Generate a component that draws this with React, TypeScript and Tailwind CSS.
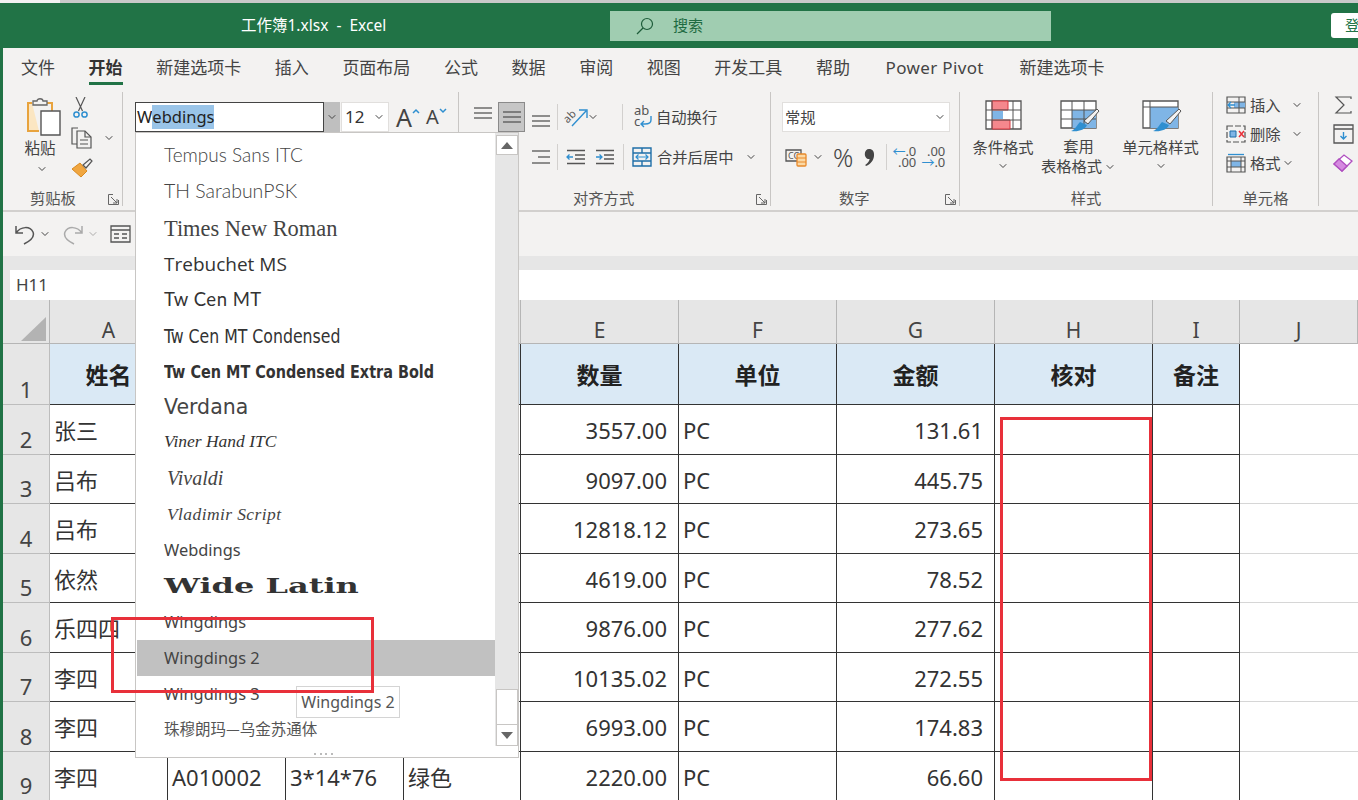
import { ChevronDown } from "lucide-react";

const TABS = ["文件", "开始", "新建选项卡", "插入", "页面布局", "公式", "数据", "审阅", "视图", "开发工具", "帮助", "Power Pivot", "新建选项卡"];

const ROWS = [
  { n: 2, name: "张三", qty: "3557.00", amt: "131.61" },
  { n: 3, name: "吕布", qty: "9097.00", amt: "445.75" },
  { n: 4, name: "吕布", qty: "12818.12", amt: "273.65" },
  { n: 5, name: "依然", qty: "4619.00", amt: "78.52" },
  { n: 6, name: "乐四四", qty: "9876.00", amt: "277.62" },
  { n: 7, name: "李四", qty: "10135.02", amt: "272.55" },
  { n: 8, name: "李四", qty: "6993.00", amt: "174.83" },
  { n: 9, name: "李四", qty: "2220.00", amt: "66.60", b: "A010002", c: "3*14*76", d: "绿色" },
];

const FONTS = [
  { label: "Tempus Sans ITC", cls: "-mt-[4px] font-['Lato',sans-serif] font-light text-[19px] text-[#444]" },
  { label: "TH SarabunPSK", cls: "-mt-[4px] font-['Lato',sans-serif] font-light text-[19.5px] text-[#444]" },
  { label: "Times New Roman", cls: "font-['Liberation_Serif',serif] text-[22.4px] text-[#444]" },
  { label: "Trebuchet MS", cls: "font-['Open_Sans',sans-serif] text-[19px] text-[#333]" },
  { label: "Tw Cen MT", cls: "font-['Lato',sans-serif] text-[18.5px] tracking-[0.5px] text-[#333]" },
  { label: "Tw Cen MT Condensed", cls: "origin-left scale-x-[0.92] font-['DejaVu_Sans_Condensed',sans-serif] text-[19px] text-[#333]" },
  { label: "Tw Cen MT Condensed Extra Bold", cls: "origin-left scale-x-[0.89] font-['DejaVu_Sans_Condensed',sans-serif] font-bold text-[18px] text-[#333]" },
  { label: "Verdana", cls: "font-['DejaVu_Sans',sans-serif] text-[20.5px] text-[#444]" },
  { label: "Viner Hand ITC", cls: "-mt-[4px] font-['Liberation_Serif',serif] italic text-[17.5px] text-[#333]" },
  { label: "Vivaldi", cls: "-mt-[2px] ml-[3px] font-['Liberation_Serif',serif] italic text-[20px] text-[#444]" },
  { label: "Vladimir Script", cls: "-mt-[2px] ml-[3px] font-['Liberation_Serif',serif] italic text-[17.5px] tracking-[0.4px] text-[#444]" },
  { label: "Webdings", cls: "font-['Noto_Sans',sans-serif] text-[16.4px] text-[#444]" },
  { label: "Wide Latin", cls: "origin-left scale-x-[1.6] font-['DejaVu_Serif',serif] font-bold text-[20px] text-[#333]" },
  { label: "Wingdings", cls: "font-['Noto_Sans',sans-serif] text-[16.4px] text-[#444]" },
  { label: "Wingdings 2", cls: "font-['Noto_Sans',sans-serif] text-[16.4px] text-[#444]", active: true },
  { label: "Wingdings 3", cls: "font-['Noto_Sans',sans-serif] text-[16.4px] text-[#444]" },
  { label: "珠穆朗玛—乌金苏通体", cls: "-mt-[3px] font-['Noto_Sans_CJK_SC',sans-serif] text-[15.5px] text-[#555]" },
];

function Chev({ className = "" }: { className?: string }) {
  return <ChevronDown size={12} strokeWidth={2} className={`shrink-0 text-[#444] ${className}`} />;
}

function Launcher() {
  return (
    <svg width="11" height="11" viewBox="0 0 11 11" fill="none" stroke="#666" strokeWidth="1">
      <path d="M5 .5H.5V10.5H10.5V6" />
      <path d="M3 3L9 9M9 5V9H5" />
    </svg>
  );
}

function Lines({ ys, xs }: { ys: number[]; xs: [number, number][] }) {
  return (
    <svg width="20" height="24" viewBox="0 0 20 24" stroke="#555" strokeWidth="1.3">
      {ys.map((y, i) => (
        <line key={y} x1={xs[i][0]} x2={xs[i][1]} y1={y} y2={y} />
      ))}
    </svg>
  );
}

function Indent({ flip }: { flip?: boolean }) {
  return (
    <svg width="20" height="20" viewBox="0 0 20 20" fill="none">
      <path d="M1 3.5H19M9 8H19M9 12H19M1 16.5H19" stroke="#555" strokeWidth="1.3" />
      <path d={flip ? "M1 10H7M4.5 7.5L7 10L4.5 12.5" : "M1 10H7M3.5 7.5L1 10L3.5 12.5"} stroke="#2f8fd0" strokeWidth="1.3" />
    </svg>
  );
}

function Group({ w, label, launcher, labelClass = "justify-center", children }: { w: string; label?: string; launcher?: boolean; labelClass?: string; children: React.ReactNode }) {
  return (
    <div className={`relative mt-[7px] mb-[4px] flex shrink-0 flex-col border-r border-[#c8c6c4] ${w}`}>
      <div className="h-[98px]">{children}</div>
      <div className={`flex h-[16px] items-center ${labelClass}`}>
        {label && <span className="text-[15.3px] text-[#555]">{label}</span>}
      </div>
      {launcher && (
        <span className="absolute right-[3px] bottom-[1px]">
          <Launcher />
        </span>
      )}
    </div>
  );
}

function Ribbon() {
  return (
    <div className="flex h-[127px] border-b-2 border-[#d2d0ce] bg-[#f3f2f1]">
      <Group w="w-[120px]" label="剪贴板" launcher labelClass="justify-start pl-[27px]">
        <div className="flex">
          <div className="ml-[20px] flex w-[40px] flex-col items-center">
            <svg className="mt-[5px]" width="40" height="40" viewBox="0 0 40 40" fill="none">
              <path d="M9 6H5V34H16" stroke="#e8a33d" strokeWidth="2" fill="#fbe6c2" />
              <path d="M24 6H29V14" stroke="#e8a33d" strokeWidth="2" />
              <path d="M10 8V4H14C14 1 20 1 20 4H24V8Z" fill="#f3f2f1" stroke="#666" strokeWidth="1.3" />
              <path d="M18 14H37V38H18Z" fill="#fff" stroke="#555" strokeWidth="1.4" />
            </svg>
            <span className="mt-[1px] -ml-[6px] text-[15.5px] leading-[20px] text-[#444]">粘贴</span>
            <Chev className="mt-[5px] -ml-[2px]" />
          </div>
          <div className="ml-[8px] flex flex-col items-start pt-[5px]">
            <svg className="ml-[1px]" width="17" height="22" viewBox="0 0 17 22" fill="none">
              <path d="M4 0L10.5 14M13 0L6.5 14" stroke="#555" strokeWidth="1.2" />
              <circle cx="4.5" cy="17.5" r="2.6" stroke="#2f8fd0" strokeWidth="1.5" />
              <circle cx="12.5" cy="17.5" r="2.6" stroke="#2f8fd0" strokeWidth="1.5" />
            </svg>
            <div className="mt-[8px] flex items-center gap-[11px]">
              <svg width="21" height="22" viewBox="0 0 21 22" fill="none" stroke="#555" strokeWidth="1.2">
                <path d="M7 1H1V17H6" />
                <path d="M6 4H14L20 10V21H6Z" fill="#f3f2f1" />
                <path d="M14 4V10H20M9 13H17M9 17H17" />
              </svg>
              <Chev />
            </div>
            <svg className="mt-[9px]" width="22" height="20" viewBox="0 0 22 20" fill="none">
              <path d="M1 11L9 5L16 13L10 19Z" fill="#f0a640" stroke="#d98a20" strokeWidth="1" />
              <path d="M12 7L19 1L21 3L15 10Z" fill="#f3f2f1" stroke="#555" strokeWidth="1.2" />
            </svg>
          </div>
        </div>
      </Group>

      <Group w="w-[336px]">
        <div className="mt-[10px] ml-[12px] flex h-[30px] items-center">
          <div className="flex h-[30px] w-[189px] items-center border-[1.5px] border-[#444] bg-white pl-[1px] text-[16.5px] text-[#222]">
            W<span className="bg-[#99c4e8]">ebdings</span>
          </div>
          <div className="flex h-[30px] w-[16px] items-center justify-center bg-[#bfbfbf]">
            <Chev />
          </div>
          <div className="ml-[1px] flex h-[30px] w-[48px] items-center justify-between border border-[#e1dfdd] bg-white pr-[3px] pl-[3px] text-[17px] text-[#333]">
            12
            <Chev />
          </div>
          <span className="ml-[7px] text-[25px] leading-none text-[#444]">A</span>
          <svg className="mb-[12px]" width="8" height="6" viewBox="0 0 8 6" fill="none" stroke="#2f8fd0" strokeWidth="1.5"><path d="M1 5L4 2L7 5" /></svg>
          <span className="ml-[6px] text-[20px] leading-none text-[#444]">A</span>
          <svg className="mb-[12px]" width="8" height="6" viewBox="0 0 8 6" fill="none" stroke="#2f8fd0" strokeWidth="1.5"><path d="M1 1L4 4L7 1" /></svg>
        </div>
      </Group>

      <Group w="w-[312px]" label="对齐方式" launcher labelClass="justify-start pl-[114px]">
        <div className="ml-[14px] mt-[10px] flex h-[30px] items-center">
          <Lines ys={[3, 8, 13]} xs={[[1, 19], [1, 19], [1, 19]]} />
          <div className="ml-[5px] flex h-[30px] w-[27px] items-center justify-center border border-[#8a8a8a] bg-[#c6c6c6]">
            <Lines ys={[7, 12, 17]} xs={[[1, 19], [1, 19], [1, 19]]} />
          </div>
          <div className="ml-[6px]">
            <Lines ys={[11, 16, 21]} xs={[[1, 19], [1, 19], [1, 19]]} />
          </div>
          <div className="ml-[6px] h-[26px] w-px bg-[#d2d0ce]" />
          <svg className="ml-[5px]" width="26" height="22" viewBox="0 0 26 22" fill="none">
            <text x="1" y="15" fontSize="11" fill="#555" transform="rotate(-45 6 12)">ab</text>
            <path d="M9 20L23 5M16 4H24V12" stroke="#2f8fd0" strokeWidth="1.4" />
          </svg>
          <Chev className="-ml-[2px]" />
          <div className="ml-[23px] h-[26px] w-px bg-[#d2d0ce]" />
          <svg className="ml-[11px]" width="18" height="24" viewBox="0 0 18 24" fill="none">
            <text x="0" y="10" fontSize="13" fill="#555">ab</text>
            <text x="0" y="21" fontSize="13" fill="#555">c</text>
            <path d="M17 11V15C17 18 14 19 11 19H7M10 16L7 19L10 22" stroke="#2f8fd0" strokeWidth="1.4" />
          </svg>
          <span className="ml-[4px] text-[15.3px] text-[#444]">自动换行</span>
        </div>
        <div className="ml-[14px] mt-[10px] flex h-[30px] items-center">
          <div className="ml-[58px]">
            <Lines ys={[6, 12, 18]} xs={[[1, 19], [7, 19], [1, 19]]} />
          </div>
          <div className="ml-[6px] h-[26px] w-px bg-[#d2d0ce]" />
          <div className="ml-[8px]"><Indent /></div>
          <div className="ml-[9px]"><Indent flip /></div>
          <div className="ml-[8px] h-[26px] w-px bg-[#d2d0ce]" />
          <svg className="ml-[8px]" width="20" height="20" viewBox="0 0 20 20" fill="none">
            <path d="M1 1H19V19H1ZM1 6H19M1 14H19M10 1V6M10 14V19" stroke="#1f6fa8" strokeWidth="1.4" />
            <path d="M4 10H16M6.5 7.5L4 10L6.5 12.5M13.5 7.5L16 10L13.5 12.5" stroke="#2f8fd0" strokeWidth="1.2" />
          </svg>
          <span className="ml-[5px] text-[15.3px] text-[#444]">合并后居中</span>
          <Chev className="ml-[11px]" />
        </div>
      </Group>

      <Group w="w-[189px]" label="数字" launcher labelClass="justify-start pl-[68px]">
        <div className="mt-[10px] ml-[11px] flex h-[30px] w-[168px] items-center justify-between border border-[#e1dfdd] bg-white pr-[3px] pl-[2px] text-[15.3px] text-[#444]">
          常规
          <Chev />
        </div>
        <div className="mt-[10px] ml-[14px] flex h-[30px] items-center">
          <svg width="22" height="20" viewBox="0 0 22 20" fill="none">
            <path d="M1 3H16V14H1Z" stroke="#555" strokeWidth="1.3" />
            <text x="3" y="12" fontSize="9" fill="#555">CC</text>
            <rect x="12" y="7" width="9" height="12" rx="1" fill="#fbd9a5" stroke="#e8892a" strokeWidth="1.3" />
            <path d="M12 11H21M12 15H21" stroke="#e8892a" />
          </svg>
          <Chev className="ml-[5px]" />
          <span className="ml-[9px] text-[25px] leading-none font-light text-[#444]">%</span>
          <svg className="ml-[11px]" width="11" height="19" viewBox="0 0 11 19"><path d="M5 1C8.5 1 10.5 3.5 10 8C9.6 12 7 16 2 18L1.2 17C4 15 5.4 13 5.6 11C2.8 11.4 .8 9 .8 6C.8 3 2.6 1 5 1Z" fill="#444" /></svg>
          <div className="ml-[11px] h-[26px] w-px bg-[#d2d0ce]" />
          <div className="ml-[7px] flex w-[22px] flex-col items-end text-[13px] leading-[11px] text-[#555]">
            <span><span className="text-[#2f8fd0]">←</span>.0</span>
            <span>.00</span>
          </div>
          <div className="ml-[7px] flex w-[22px] flex-col items-end text-[13px] leading-[11px] text-[#555]">
            <span>.00</span>
            <span><span className="text-[#2f8fd0]">→</span>.0</span>
          </div>
        </div>
      </Group>

      <Group w="w-[253px]" label="样式">
        <div className="flex pt-[8px]">
          <div className="ml-[12px] flex w-[62px] flex-col items-center">
            <svg width="37" height="30" viewBox="0 0 37 30" fill="none">
              <path d="M1 1H36V29H1Z" fill="#fff" stroke="#555" strokeWidth="1.3" />
              <path d="M7 1H23V10H7ZM7 20H25V29H7Z" fill="#f5888d" stroke="#d9363e" />
              <path d="M7 11H18V19H7Z" fill="#7fb5e6" />
              <path d="M1 10H36M1 20H36M7 1V29M28 1V29" stroke="#555" strokeWidth="1" />
            </svg>
            <span className="mt-[6px] text-[15.3px] leading-[22px] whitespace-nowrap text-[#444]">条件格式</span>
            <Chev className="mt-[2px]" />
          </div>
          <div className="ml-[10px] flex w-[69px] flex-col items-center">
            <svg className="ml-[3px]" width="40" height="32" viewBox="0 0 40 32" fill="none">
              <path d="M1 1H36V28H1Z" fill="#fff" stroke="#555" strokeWidth="1.3" />
              <path d="M12 10H36V28H12Z" fill="#7fb5e6" />
              <path d="M1 10H36M1 19H36M12 1V28M24 1V28" stroke="#555" strokeWidth="1" />
              <path d="M24 21L37 9L39 11L28 24Z" fill="#f3f2f1" stroke="#555" />
              <path d="M11 31C15 30 17 25 20 22L27 25C25 30 18 32 11 31Z" fill="#2f8fd0" />
            </svg>
            <span className="mt-[4px] text-[15.3px] leading-[20px] text-[#444]">套用</span>
            <span className="flex text-[15.3px] leading-[20px] whitespace-nowrap text-[#444]">表格格式<Chev className="mt-[5px] ml-[2px]" /></span>
          </div>
          <div className="ml-[9px] flex w-[77px] flex-col items-center">
            <svg className="ml-[3px]" width="40" height="32" viewBox="0 0 40 32" fill="none">
              <path d="M1 1H36V28H1Z" fill="#fff" stroke="#555" strokeWidth="1.3" />
              <path d="M8 7H36V28H8Z" fill="#7fb5e6" />
              <path d="M1 7H36M8 1V28" stroke="#555" strokeWidth="1" />
              <path d="M24 21L37 9L39 11L28 24Z" fill="#f3f2f1" stroke="#555" />
              <path d="M11 31C15 30 17 25 20 22L27 25C25 30 18 32 11 31Z" fill="#2f8fd0" />
            </svg>
            <span className="mt-[4px] text-[15.3px] leading-[22px] whitespace-nowrap text-[#444]">单元格样式</span>
            <Chev className="mt-[2px]" />
          </div>
        </div>
      </Group>

      <Group w="w-[106px]" label="单元格">
        <div className="flex flex-col gap-[7px] pt-[2px] pl-[13px] text-[15.3px] text-[#444]">
          <div className="flex h-[22px] items-center">
            <svg width="20" height="18" viewBox="0 0 20 18" fill="none">
              <path d="M1 1H19V17H1Z" stroke="#555" strokeWidth="1.2" />
              <path d="M8 6H19V12H8Z" fill="#7fb5e6" />
              <path d="M1 6H19M1 12H19M13 1V17" stroke="#555" />
              <path d="M2 9H9M5 6L2 9L5 12" stroke="#2f8fd0" strokeWidth="1.3" />
            </svg>
            <span className="ml-[4px]">插入</span>
            <Chev className="ml-[10px]" />
          </div>
          <div className="flex h-[22px] items-center">
            <svg width="20" height="18" viewBox="0 0 20 18" fill="none">
              <path d="M1 1H19V17H1Z" stroke="#555" strokeWidth="1.2" strokeDasharray="6 2" />
              <path d="M4 6H10V12H4Z" fill="#7fb5e6" stroke="#1f6fa8" />
              <path d="M13 6L18 12M18 6L13 12" stroke="#e8303a" strokeWidth="1.5" />
            </svg>
            <span className="ml-[4px]">删除</span>
            <Chev className="ml-[10px]" />
          </div>
          <div className="flex h-[22px] items-center">
            <svg width="20" height="20" viewBox="0 0 20 20" fill="none">
              <path d="M1 4H19V19H1Z" stroke="#555" strokeWidth="1.2" />
              <path d="M5 8H15V14H5Z" fill="#7fb5e6" />
              <path d="M1 8H19M1 14H19M5 4V19M15 4V19" stroke="#555" />
              <path d="M2 1.5H18" stroke="#2f8fd0" strokeWidth="1.3" />
            </svg>
            <span className="ml-[4px]">格式</span>
            <Chev className="ml-[1px]" />
          </div>
        </div>
      </Group>

      <div className="my-[7px] flex shrink-0 flex-col gap-[9px] pt-[3px] pl-[14px]">
        <svg width="20" height="20" viewBox="0 0 20 20" fill="none"><path d="M18 4V2H3L11 10L3 18H18V16" stroke="#555" strokeWidth="1.2" /></svg>
        <svg width="21" height="20" viewBox="0 0 21 20" fill="none">
          <path d="M1 1H20V19H1ZM1 5H20" stroke="#555" strokeWidth="1.3" />
          <path d="M10.5 8V15M7.5 12L10.5 15L13.5 12" stroke="#2f8fd0" strokeWidth="1.4" />
        </svg>
        <svg width="20" height="20" viewBox="0 0 20 20" fill="none">
          <path d="M1 11L11 2L19 8L9 18Z" fill="#fff" stroke="#b04fc0" strokeWidth="1.3" />
          <path d="M1 11L6 6L14 13L9 18Z" fill="#d58ae0" stroke="#b04fc0" strokeWidth="1.3" />
        </svg>
      </div>
    </div>
  );
}

function Sheet() {
  const colHead = "flex items-end justify-center border-r border-b border-[#b5b5b5] bg-[#e6e6e6] text-[21px] leading-[26px] text-[#444]";
  const rowHead = "flex items-end justify-center border-r border-b border-[#bdbdbd] bg-[#e6e6e6] pb-[1px] text-[22px] leading-[28px] text-[#444]";
  const head = "flex items-center justify-center border-r border-b border-[#333] bg-[#dae9f5] pt-[2px] text-[23px] font-bold text-[#222]";
  const cell = "flex items-center overflow-hidden border-r border-b border-[#333] pt-[2px] text-[22px] whitespace-nowrap text-[#333]";
  const left = `${cell} pl-[4px]`;
  const right = `${cell} justify-end pr-[11px]`;
  const blank = "border-r border-b border-[#333]";
  const empty = "border-b border-[#d6d6d6]";

  return (
    <div className="grid grid-cols-[47px_118px_118px_118px_117px_158px_158px_158px_158px_87px_118px] grid-rows-[44px_61px_50px_49px_50px_49px_50px_49px_50px_49px]">
      <div className="flex items-end justify-end border-r border-b border-[#b5b5b5] bg-[#e6e6e6] pr-[2px] pb-[2px]">
        <svg width="26" height="24" viewBox="0 0 26 24"><path d="M25 0V24H0Z" fill="#b3b3b3" /></svg>
      </div>
      {["A", "", "", "", "E", "F", "G", "H", "I", "J"].map((c, i) => (
        <div key={i} className={colHead}>{c}</div>
      ))}

      <div className={rowHead}>1</div>
      <div className={head}>姓名</div>
      <div className={head} />
      <div className={head} />
      <div className={head} />
      <div className={head}>数量</div>
      <div className={head}>单位</div>
      <div className={head}>金额</div>
      <div className={head}>核对</div>
      <div className={head}>备注</div>
      <div className={empty} />

      {ROWS.map((r) => (
        <div key={r.n} className="contents">
          <div className={rowHead}>{r.n}</div>
          <div className={left}>{r.name}</div>
          <div className={left}>{r.b}</div>
          <div className={left}>{r.c}</div>
          <div className={left}>{r.d}</div>
          <div className={right}>{r.qty}</div>
          <div className={left}>PC</div>
          <div className={right}>{r.amt}</div>
          <div className={blank} />
          <div className={blank} />
          <div className={empty} />
        </div>
      ))}
    </div>
  );
}

function FontDropdown() {
  return (
    <div className="absolute top-[132px] left-[135px] flex h-[626px] w-[384px] border border-[#c8c6c4] bg-white">
      <div className="flex-1 pt-[6px] pl-[1px]">
        {FONTS.map((f) => (
          <div key={f.label} className={`flex h-[35.8px] items-center pl-[27px] whitespace-nowrap ${f.active ? "bg-[#c1c1c1]" : ""}`}>
            <span className={`inline-block ${f.cls}`}>{f.label}</span>
          </div>
        ))}
      </div>
      <div className="mb-[11px] flex w-[23px] flex-col items-center bg-[#e6e6e6]">
        <div className="mt-[2px] flex h-[20px] w-[22px] items-center justify-center border border-[#c8c6c4] bg-white">
          <svg width="12" height="7" viewBox="0 0 12 7"><path d="M6 0L12 7H0Z" fill="#666" /></svg>
        </div>
        <div className="flex-1" />
        <div className="h-[36px] w-[22px] border border-[#c8c6c4] bg-white" />
        <div className="flex h-[21px] w-[22px] items-center justify-center border border-t-0 border-[#c8c6c4] bg-white">
          <svg width="12" height="7" viewBox="0 0 12 7"><path d="M0 0H12L6 7Z" fill="#666" /></svg>
        </div>
      </div>
      <div className="absolute bottom-[2px] left-[178px] flex gap-[3.5px]">
        <span className="size-[2px] bg-[#bbb]" />
        <span className="size-[2px] bg-[#bbb]" />
        <span className="size-[2px] bg-[#bbb]" />
        <span className="size-[2px] bg-[#bbb]" />
      </div>
    </div>
  );
}

export default function App() {
  return (
    <div className="relative h-[800px] w-[1358px] overflow-hidden bg-white font-['Noto_Sans','Noto_Sans_CJK_SC',sans-serif]">
      <div className="flex h-[3px] bg-[#c9c9c9]">
        <div className="w-[60px] bg-[#f2f2f2]" />
      </div>
      <div className="border-l-[3px] border-[#217346]">
        <header className="flex h-[45px] items-center bg-[#217346]">
          <span className="ml-[238px] w-[369px] text-[15.5px] whitespace-pre text-white">工作簿1.xlsx  -  Excel</span>
          <div className="flex h-[30px] w-[441px] items-center bg-[#a0cdb1] pl-[26px] text-[15px] text-[#1e6b41]">
            <svg className="-scale-x-100" width="18" height="18" viewBox="0 0 18 18" fill="none" stroke="#1e5c3a" strokeWidth="1.2">
              <circle cx="7" cy="7" r="5.5" />
              <path d="M11 11L17 17" />
            </svg>
            <span className="ml-[19px]">搜索</span>
          </div>
          <div className="ml-auto flex h-[25px] w-[27px] items-center overflow-hidden rounded-l-[3px] bg-white pl-[14px] text-[15px] text-[#217346]">
            <span className="whitespace-nowrap">登</span>
          </div>
        </header>
        <nav className="flex h-[37px] gap-[33.6px] bg-[#f3f2f1] pl-[18px]">
          {TABS.map((t, i) => (
            <div key={i} className={`flex h-[37px] items-center border-b-[3px] pt-[5px] text-[17px] whitespace-nowrap ${i === 1 ? "border-[#217346] font-bold text-[#333]" : "border-transparent text-[#444]"} ${i === 11 ? "mx-[2px] tracking-[0.36px]" : ""}`}>
              {t}
            </div>
          ))}
        </nav>
        <Ribbon />
        <div className="flex h-[44px] items-center bg-[#f3f2f1] pl-[12px]">
          <svg width="20" height="22" viewBox="0 0 20 22" fill="none" stroke="#555" strokeWidth="1.5">
            <path d="M1 3V10H8M1 10C6 3 15 3 18 9C20 14 15 18 9 21" />
          </svg>
          <Chev className="ml-[4px]" />
          <svg className="ml-[12px]" width="20" height="22" viewBox="0 0 20 22" fill="none" stroke="#aaa" strokeWidth="1.5">
            <path d="M19 3V10H12M19 10C14 3 5 3 2 9C0 14 5 18 11 21" />
          </svg>
          <Chev className="ml-[4px] opacity-40" />
          <svg className="ml-[11px]" width="21" height="20" viewBox="0 0 21 20" fill="none" stroke="#555" strokeWidth="1.3">
            <path d="M1 2H20V18H1ZM1 6H20M4 10H9M12 10H17M4 14H9M12 14H17" />
          </svg>
        </div>
        <div className="h-[14px] bg-[#e6e6e6]" />
        <div className="flex h-[30px] bg-[#e6e6e6] pl-[7px]">
          <div className="flex flex-1 items-center bg-white pl-[6px] text-[17px] text-[#444]">H11</div>
        </div>
        <Sheet />
      </div>

      <FontDropdown />

      <div className="absolute top-[686px] left-[296px] flex h-[32px] w-[104px] items-center justify-center border border-[#d4d4d4] bg-white text-[16px] text-[#555]">Wingdings 2</div>
      <div className="absolute top-[617px] left-[111px] h-[76px] w-[263px] border-[3px] border-[#e8303a]" />
      <div className="absolute top-[417px] left-[1000px] h-[364px] w-[152px] border-[3px] border-[#e8303a]" />
    </div>
  );
}
